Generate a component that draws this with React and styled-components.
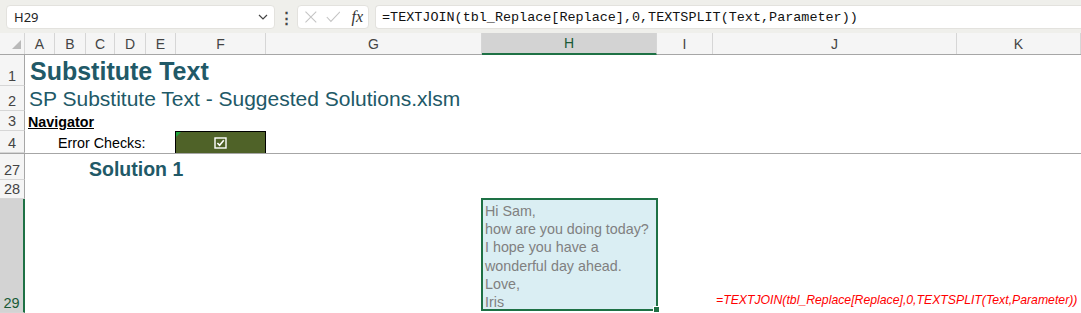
import React from "react";
import styled, { createGlobalStyle } from "styled-components";

const COLS = [
  { key: "A", w: 30 },
  { key: "B", w: 31 },
  { key: "C", w: 29 },
  { key: "D", w: 31 },
  { key: "E", w: 30 },
  { key: "F", w: 90 },
  { key: "G", w: 216 },
  { key: "H", w: 175 },
  { key: "I", w: 56 },
  { key: "J", w: 244 },
  { key: "K", w: 124 },
];

const TEMPLATE = `25px ${COLS.map((c) => `${c.w}px`).join(" ")}`;
const SELECTED_COL = "H";
const GREEN = "#1e7145";

const GlobalStyle = createGlobalStyle`
  html, body {
    margin: 0;
    padding: 0;
    background: #ffffff;
  }
  body {
    font-family: "Liberation Sans", Arial, sans-serif;
  }
`;

function Chevron() {
  return (
    <svg width="10" height="6" viewBox="0 0 10 6">
      <path d="M1 1 L5 5 L9 1" fill="none" stroke="#444" strokeWidth="1.2" />
    </svg>
  );
}

function CancelIcon() {
  return (
    <svg width="14" height="12" viewBox="0 0 14 12">
      <path d="M1.5 0.5 L12.5 11.5 M12.5 0.5 L1.5 11.5" stroke="#c4c4c4" strokeWidth="1.1" />
    </svg>
  );
}

function EnterIcon() {
  return (
    <svg width="15" height="12" viewBox="0 0 15 12">
      <path d="M0.8 6 L5 10.5 L14.2 0.8" fill="none" stroke="#c4c4c4" strokeWidth="1.1" />
    </svg>
  );
}

function SelectAll() {
  return (
    <svg width="9" height="9" viewBox="0 0 9 9">
      <polygon points="9,0 9,9 0,9" fill="#b9b9b9" />
    </svg>
  );
}

function CheckBoxGlyph() {
  return (
    <svg width="13" height="12" viewBox="0 0 13 12">
      <rect x="1" y="1" width="11" height="10" fill="none" stroke="#ffffff" strokeWidth="1.4" />
      <path d="M3.4 6 L5.6 8.3 L9.8 3.3" fill="none" stroke="#ffffff" strokeWidth="1.6" />
    </svg>
  );
}

function App() {
  const letter = [
    "Hi Sam,",
    "how are you doing today?",
    "I hope you have a",
    "wonderful day ahead.",
    "Love,",
    "Iris",
  ];

  return (
    <>
      <GlobalStyle />
      <Window>
        <FormulaBar>
          <NameBox>
            <span>H29</span>
            <Chevron />
          </NameBox>
          <Dots>⋮</Dots>
          <EditButtons>
            <CancelIcon />
            <EnterIcon />
            <Fx>fx</Fx>
          </EditButtons>
          <FormulaInput>
            =TEXTJOIN(tbl_Replace[Replace],0,TEXTSPLIT(Text,Parameter))
          </FormulaInput>
        </FormulaBar>

        <Sheet>
          <HeaderRow>
            <Corner>
              <SelectAll />
            </Corner>
            {COLS.map((c) => (
              <ColHeader key={c.key} $selected={c.key === SELECTED_COL}>
                {c.key}
              </ColHeader>
            ))}
          </HeaderRow>

          <Row $h={31}>
            <RowHeader>1</RowHeader>
            <Cell $col={2} $span={8} $pad={5}>
              <Title>Substitute Text</Title>
            </Cell>
          </Row>

          <Row $h={25}>
            <RowHeader>2</RowHeader>
            <Cell $col={2} $span={8} $pad={4}>
              <SubTitle>SP Substitute Text - Suggested Solutions.xlsm</SubTitle>
            </Cell>
          </Row>

          <Row $h={20}>
            <RowHeader>3</RowHeader>
            <Cell $col={2} $span={4} $pad={3}>
              <NavLabel>Navigator</NavLabel>
            </Cell>
          </Row>

          <Row $h={22}>
            <RowHeader>4</RowHeader>
            <Cell $col={3} $span={4} $pad={3}>
              <Plain>Error Checks:</Plain>
            </Cell>
            <CheckCell>
              <CheckBoxGlyph />
            </CheckCell>
          </Row>

          <FreezeLine />

          <Row $h={26}>
            <RowHeader>27</RowHeader>
            <Cell $col={4} $span={6} $pad={3} $bottom={0}>
              <Heading>Solution 1</Heading>
            </Cell>
          </Row>

          <Row $h={19}>
            <RowHeader>28</RowHeader>
          </Row>

          <Row $h={114}>
            <RowHeader $selected>29</RowHeader>
            <ActiveCell>
              {letter.map((line) => (
                <LetterLine key={line}>{line}</LetterLine>
              ))}
              <FillHandle />
            </ActiveCell>
            <Cell $col={11} $span={2} $pad={3} $bottom={6}>
              <FormulaNote>
                =TEXTJOIN(tbl_Replace[Replace],0,TEXTSPLIT(Text,Parameter))
              </FormulaNote>
            </Cell>
          </Row>
        </Sheet>
      </Window>
    </>
  );
}

const Window = styled.div`
  width: 1081px;
  height: 313px;
  overflow: hidden;
  display: flex;
  flex-direction: column;
  background: #ffffff;
`;

const FormulaBar = styled.div`
  height: 33px;
  flex: none;
  display: flex;
  align-items: flex-start;
  padding: 5px 0 0 6px;
  box-sizing: border-box;
  background: #efefeb;
  font-family: "Noto Sans", "Liberation Sans", Arial, sans-serif;
`;

const Box = styled.div`
  height: 24px;
  box-sizing: border-box;
  background: #ffffff;
  border: 1px solid #e3e2de;
  border-radius: 4px;
  display: flex;
  align-items: center;
`;

const NameBox = styled(Box)`
  width: 269px;
  padding: 0 6px 0 7px;
  justify-content: space-between;
  font-size: 13px;
  color: #222;
`;

const Dots = styled.div`
  width: 22px;
  height: 24px;
  display: flex;
  align-items: center;
  justify-content: center;
  font-size: 15px;
  font-weight: bold;
  color: #444;
`;

const EditButtons = styled(Box)`
  width: 72px;
  padding: 0 5px 0 6px;
  gap: 8px;
`;

const Fx = styled.span`
  font-family: "Liberation Serif", "Times New Roman", serif;
  font-style: italic;
  font-size: 16px;
  color: #333;
  margin-left: 3px;
`;

const FormulaInput = styled(Box)`
  flex: 1;
  margin-left: 6px;
  padding-left: 6px;
  border-right: none;
  border-radius: 4px 0 0 4px;
  font-family: "Liberation Mono", "Courier New", monospace;
  font-size: 13.45px;
  color: #111;
  white-space: nowrap;
`;

const Sheet = styled.div`
  flex: 1;
  display: flex;
  flex-direction: column;
`;

const HeaderRow = styled.div`
  display: grid;
  grid-template-columns: ${TEMPLATE};
  height: 22px;
  flex: none;
  background: #f5f5f5;
  border-bottom: 1px solid #a6a6a6;
  box-sizing: border-box;
`;

const Corner = styled.div`
  display: flex;
  align-items: flex-end;
  justify-content: flex-end;
  padding: 0 3px 5px 0;
  border-right: 1px solid #d6d6d6;
`;

const ColHeader = styled.div`
  display: flex;
  align-items: center;
  justify-content: center;
  font-size: 14px;
  color: ${(p) => (p.$selected ? "#1a5a37" : "#444")};
  background: ${(p) => (p.$selected ? "#d3d3d3" : "transparent")};
  border-right: 1px solid #d6d6d6;
  border-bottom: ${(p) => (p.$selected ? `2px solid ${GREEN}` : "none")};
  margin-bottom: ${(p) => (p.$selected ? "-1px" : "0")};
  box-sizing: border-box;
`;

const Row = styled.div`
  display: grid;
  grid-template-columns: ${TEMPLATE};
  height: ${(p) => p.$h}px;
  flex: none;
`;

const RowHeader = styled.div`
  grid-column: 1;
  grid-row: 1;
  display: flex;
  align-items: flex-end;
  justify-content: center;
  padding-bottom: 1px;
  box-sizing: border-box;
  font-size: 14.5px;
  color: ${(p) => (p.$selected ? "#1a5a37" : "#444")};
  background: ${(p) => (p.$selected ? "#d3d3d3" : "#f5f5f5")};
  border-bottom: 1px solid #d6d6d6;
  border-right: ${(p) => (p.$selected ? `2px solid ${GREEN}` : "1px solid #a6a6a6")};
`;

const Cell = styled.div`
  grid-row: 1;
  grid-column: ${(p) => p.$col} / span ${(p) => p.$span || 1};
  display: flex;
  align-items: flex-end;
  padding: 0 0 ${(p) => (p.$bottom != null ? p.$bottom : 1)}px ${(p) => p.$pad || 1}px;
  white-space: nowrap;
  overflow: visible;
  min-width: 0;
`;

const Title = styled.span`
  font-size: 25px;
  font-weight: bold;
  color: #215967;
  line-height: 28px;
`;

const SubTitle = styled.span`
  font-size: 21px;
  color: #215967;
  line-height: 23px;
`;

const NavLabel = styled.span`
  font-size: 14.3px;
  font-weight: bold;
  text-decoration: underline;
  color: #000;
  line-height: 16px;
`;

const Plain = styled.span`
  font-size: 14.3px;
  color: #000;
  line-height: 17px;
`;

const CheckCell = styled.div`
  grid-row: 1;
  grid-column: 7;
  margin-left: -1px;
  background: #4f6228;
  border: 1px solid #000;
  border-bottom: none;
  position: relative;
  display: flex;
  align-items: center;
  justify-content: center;
  &::before {
    content: "";
    position: absolute;
    top: 0;
    left: 0;
    border-top: 5px solid #1fa33a;
    border-right: 5px solid transparent;
  }
`;

const FreezeLine = styled.div`
  height: 1px;
  flex: none;
  background: #a6a6a6;
`;

const Heading = styled.span`
  font-size: 19.5px;
  font-weight: bold;
  color: #215967;
  line-height: 22px;
`;

const ActiveCell = styled.div`
  grid-row: 1;
  grid-column: 9;
  align-self: start;
  height: 113px;
  margin: -1px 0 0 -1px;
  width: calc(100% + 2px);
  box-sizing: border-box;
  border: 2px solid ${GREEN};
  background: #daeef3;
  padding: 2px 0 0 2px;
  position: relative;
`;

const LetterLine = styled.div`
  font-size: 14.3px;
  line-height: 18.2px;
  color: #808080;
  white-space: nowrap;
`;

const FillHandle = styled.div`
  position: absolute;
  right: -4px;
  bottom: -4px;
  width: 5px;
  height: 5px;
  background: ${GREEN};
  border: 1px solid #ffffff;
`;

const FormulaNote = styled.span`
  font-size: 12.25px;
  font-style: italic;
  color: #ff0000;
  line-height: 14px;
`;

export default App;
